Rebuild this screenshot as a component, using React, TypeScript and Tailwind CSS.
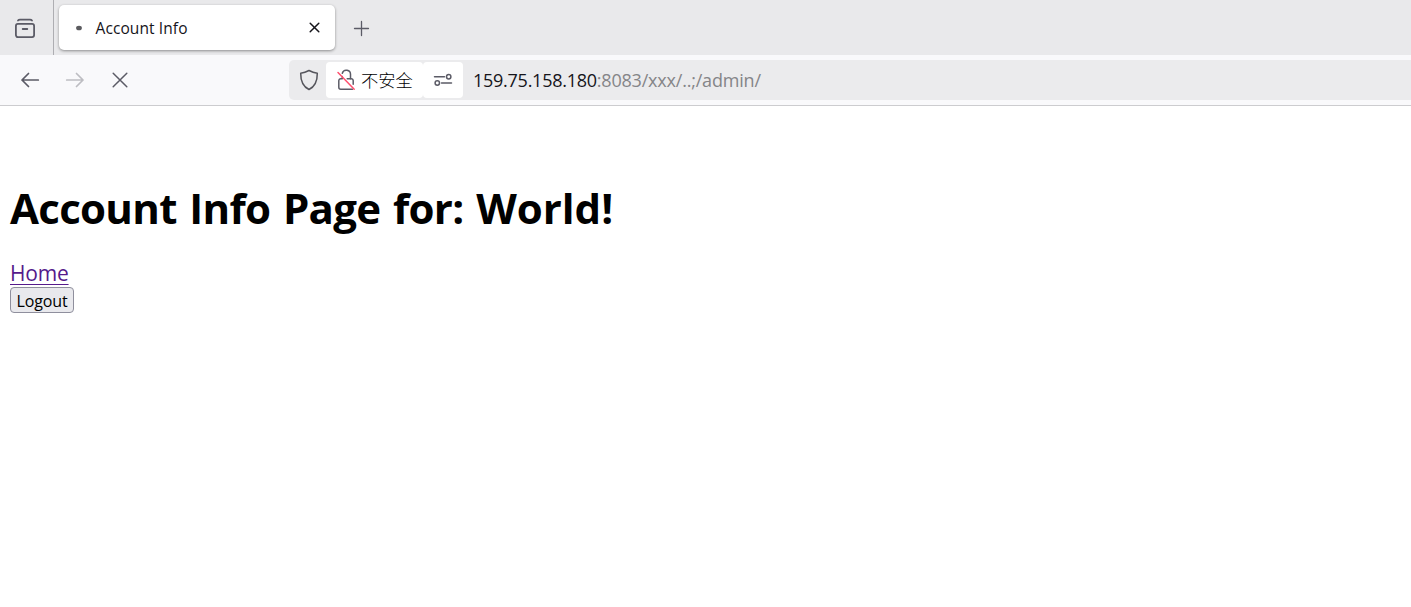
import type { ReactNode } from 'react';

interface IconProps {
  width: number;
  height: number;
  className?: string;
  strokeWidth?: number;
  children: ReactNode;
}

function Icon({ width, height, className = '', strokeWidth = 1.5, children }: IconProps) {
  return (
    <svg
      width={width}
      height={height}
      viewBox={`0 0 ${width} ${height}`}
      fill="none"
      stroke="currentColor"
      strokeWidth={strokeWidth}
      strokeLinecap="round"
      strokeLinejoin="round"
      className={`shrink-0 ${className}`}
    >
      {children}
    </svg>
  );
}

function TabBar() {
  return (
    <div className="flex h-[55px] bg-[#e9e9eb]">
      <button className="flex w-[54px] items-start border-r border-[#aeaeb2] pt-[18px] pl-[14px] text-[#5b5b66]">
        <Icon width={22} height={21} strokeWidth={1.8}>
          <path d="M4 2.6Q4.7 1.6 6 1.6H16Q17.3 1.6 18 2.6" />
          <rect x="1.9" y="5.9" width="18.2" height="13.2" rx="2" />
          <path d="M8.7 11H13.3" />
        </Icon>
      </button>
      <div className="mt-[5px] ml-[5px] flex h-[45px] w-[276px] items-center rounded-[5px] bg-white pr-[14px] pl-[17px] shadow-[0_1px_3px_rgba(0,0,0,0.4)]">
        <Icon width={6} height={6}>
          <ellipse cx="3" cy="3" rx="2.9" ry="2.3" fill="#5b5b5f" stroke="none" />
        </Icon>
        <span className="ml-[13.5px] flex-1 text-[15.5px] leading-[22px] tracking-[0.1px] text-[#15141a]">
          Account Info
        </span>
        <Icon width={13} height={13} className="text-[#15141a]">
          <path d="M2.2 2.2L10.8 10.8M10.8 2.2L2.2 10.8" />
        </Icon>
      </div>
      <button className="mt-[20px] ml-[18px] h-[17px] text-[#5b5b66]">
        <Icon width={17} height={17} strokeWidth={1.3}>
          <path d="M1.5 8.5H15.5M8.5 1.5V15.5" />
        </Icon>
      </button>
    </div>
  );
}

function AddressBar() {
  return (
    <div className="ml-[159px] flex h-10 flex-1 items-center rounded-l-[5px] bg-[#ebebed] pl-[10px]">
      <Icon width={20} height={22} className="text-[#55555c]">
        <path d="M10 1.5Q14 3.6 18.3 4.2C18.4 11 17 17 10 20.5C3 17 1.6 11 1.7 4.2Q6 3.6 10 1.5Z" />
      </Icon>
      <div className="ml-[7px] flex h-9 w-[97px] items-center rounded-[4px] bg-white pl-[10px]">
        <Icon width={20} height={22} className="text-[#5b5b66]">
          <path d="M6.3 4.2a4.2 4.2 0 0 1 8.2 1.5V9.7" />
          <path d="M11.2 9.7H15.2a2 2 0 0 1 2 2V15.3M16.4 20.2H4.8a2 2 0 0 1-2-2V11.7a2 2 0 0 1 2-2H6.3V7.5" />
          <path d="M2 3.5L18.2 20.2" stroke="#ff4f6e" />
        </Icon>
        <span className="mt-[2px] ml-[5px] text-[17.3px] leading-6 font-light whitespace-nowrap text-black">
          不安全
        </span>
      </div>
      <div className="flex h-9 w-10 items-center justify-center rounded-[4px] bg-white text-[#5b5b66]">
        <Icon width={20} height={16}>
          <path d="M1.5 4.7H11.5" />
          <circle cx="15.7" cy="4.7" r="2.2" />
          <circle cx="4.3" cy="11" r="2.2" />
          <path d="M8.5 11H18.5" />
        </Icon>
      </div>
      <span className="ml-[10px] text-[18px] leading-6 tracking-[-0.2px] whitespace-nowrap text-[#858588]">
        <span className="tracking-[-0.26px] text-[#15141a]">159.75.158.180</span>:8083/xxx/..;/admin/
      </span>
    </div>
  );
}

function Toolbar() {
  return (
    <div className="flex h-[51px] items-center border-b border-[#cccccf] bg-[#f9f9fb] pl-[20px] text-[#5b5b66]">
      <Icon width={20} height={16} strokeWidth={1.7}>
        <path d="M18.3 8H2M8.5 1.5L2 8L8.5 14.5" />
      </Icon>
      <Icon width={20} height={16} strokeWidth={1.7} className="ml-[25px] text-[#bdbdc2]">
        <path d="M1.7 8H18M11.5 1.5L18 8L11.5 14.5" />
      </Icon>
      <Icon width={16} height={16} className="ml-[27px]">
        <path d="M1.2 1.2L14.8 14.8M14.8 1.2L1.2 14.8" />
      </Icon>
      <div className="ml-[2px] flex flex-1">
        <AddressBar />
      </div>
    </div>
  );
}

export default function App() {
  return (
    <div className="h-[607px] w-full overflow-hidden bg-white font-['Open_Sans','Noto_Sans_CJK_SC',sans-serif]">
      <TabBar />
      <Toolbar />
      <main className="flex flex-col items-start pt-[74px] pl-[10px] text-black">
        <h1 className="text-[42px] leading-[56px] font-bold tracking-[-0.7px] whitespace-nowrap [word-spacing:2.4px]">
          Account Info Page for: <span className="tracking-normal">World!</span>
        </h1>
        <a
          href="#"
          className="mt-[23px] text-[21px] leading-[28px] tracking-[-0.2px] text-[#551a8b] underline decoration-1 underline-offset-[3px]"
        >
          Home
        </a>
        <button className="h-[26px] w-16 rounded-[4px] border border-[#8f8f9d] bg-[#e9e9ed] pt-px text-center text-[16px] leading-6 tracking-[-0.1px]">
          Logout
        </button>
      </main>
    </div>
  );
}
